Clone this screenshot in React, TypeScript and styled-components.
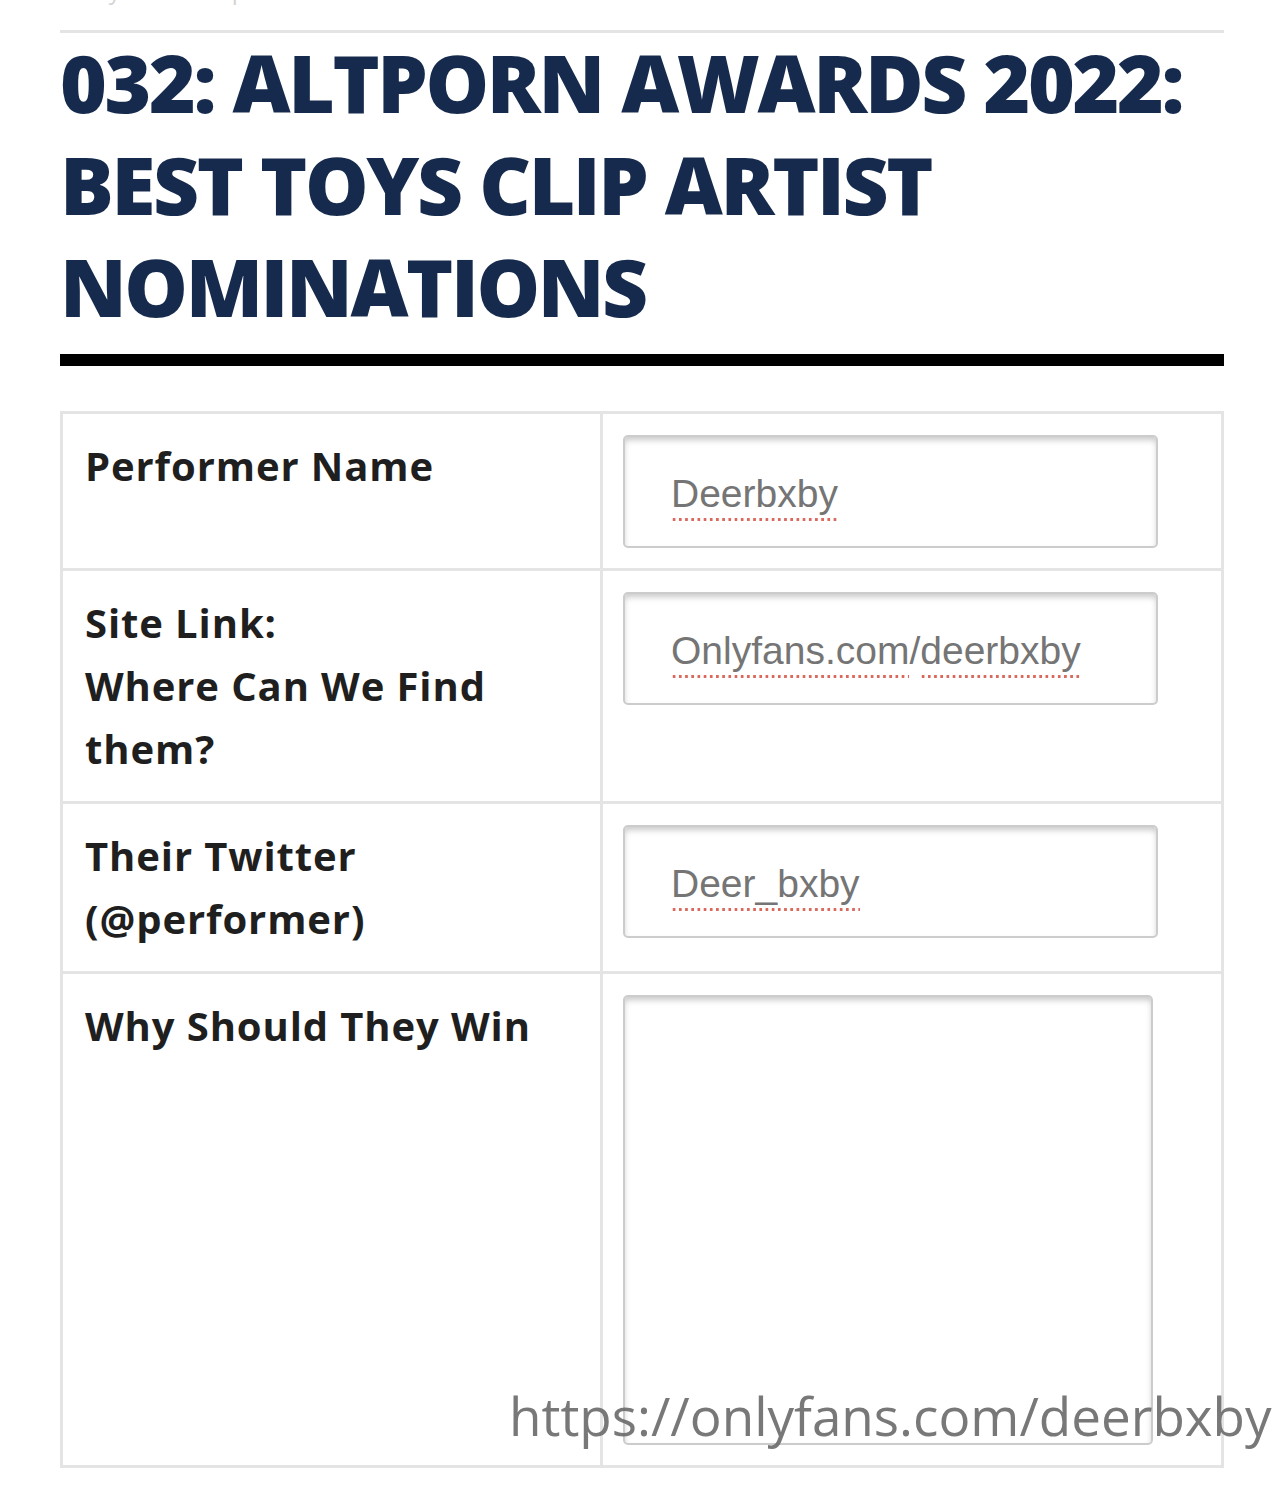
import React from "react";
import styled, { createGlobalStyle } from "styled-components";

const GlobalStyle = createGlobalStyle`
    html, body {
        margin: 0;
        padding: 0;
        background: #ffffff;
    }
    body {
        font-family: "Open Sans", "Noto Sans", Arial, sans-serif;
        overflow: hidden;
    }
`;

type Part = { text: string; typo?: boolean };

type Row = {
    label: string[];
    value?: Part[];
    tall?: boolean;
};

const rows: Row[] = [
    { label: ["Performer Name"], value: [{ text: "Deerbxby", typo: true }] },
    {
        label: ["Site Link:", "Where Can We Find", "them?"],
        value: [
            { text: "Onlyfans.com", typo: true },
            { text: "/" },
            { text: "deerbxby", typo: true },
        ],
    },
    { label: ["Their Twitter", "(@performer)"], value: [{ text: "Deer_bxby", typo: true }] },
    { label: ["Why Should They Win"], tall: true },
];

export default function App() {
    return (
        <Page>
            <GlobalStyle />
            <Meta>by admin&nbsp;&nbsp;&nbsp;April 2022&nbsp;&nbsp;&nbsp;0</Meta>
            <TopRule />
            <Title>
                032: ALTPORN AWARDS 2022:
                <br />
                BEST TOYS CLIP ARTIST
                <br />
                NOMINATIONS
            </Title>
            <ThickBar />

            <FormTable>
                {rows.map((row) => (
                    <React.Fragment key={row.label[0]}>
                        <LabelCell>
                            {row.label.map((line) => (
                                <LabelLine key={line}>{line}</LabelLine>
                            ))}
                        </LabelCell>
                        <FieldCell>
                            {row.tall ? (
                                <Area />
                            ) : (
                                <Field role="textbox">
                                    {row.value?.map((part) => (
                                        <Word key={part.text} $typo={part.typo}>
                                            {part.text}
                                        </Word>
                                    ))}
                                </Field>
                            )}
                        </FieldCell>
                    </React.Fragment>
                ))}
            </FormTable>

            <Watermark>https://onlyfans.com/deerbxby</Watermark>
        </Page>
    );
}

const Page = styled.div`
    position: relative;
    width: 1284px;
    height: 1497px;
    box-sizing: border-box;
    padding: 0 60px;
    overflow: hidden;
`;

const Meta = styled.div`
    margin-top: -25px;
    padding-left: 34px;
    height: 30px;
    line-height: 30px;
    font-size: 24px;
    color: #d4d4d4;
    white-space: nowrap;
`;

const TopRule = styled.div`
    margin-top: 25px;
    height: 3px;
    background: #e4e4e4;
`;

const Title = styled.h1`
    margin: -2px 0 0;
    font-family: "Open Sans", "Noto Sans", sans-serif;
    font-weight: 800;
    font-size: 80px;
    line-height: 102px;
    letter-spacing: -2.4px;
    color: #152a4c;
    white-space: nowrap;
`;

const ThickBar = styled.div`
    margin-top: 17px;
    height: 12px;
    background: #000000;
`;

const FormTable = styled.div`
    margin-top: 45px;
    display: grid;
    grid-template-columns: 537px 1fr;
    gap: 3px;
    padding: 3px;
    background: #e4e4e4;
`;

const LabelCell = styled.div`
    background: #ffffff;
    padding: 20px 22px 21px;
`;

const LabelLine = styled.div`
    font-family: "Open Sans", "Noto Sans", sans-serif;
    font-weight: 700;
    font-size: 40px;
    line-height: 63px;
    letter-spacing: 0.9px;
    color: #1f1f1f;
    white-space: nowrap;
`;

const FieldCell = styled.div`
    background: #ffffff;
    padding: 21px 20px 20px;
`;

const Field = styled.div`
    box-sizing: border-box;
    width: 535px;
    height: 113px;
    padding: 4px 0 0 46px;
    display: flex;
    align-items: center;
    border: 2px solid #cccccc;
    border-radius: 5px;
    box-shadow: inset 0 4px 6px -1px rgba(0, 0, 0, 0.22);
    font-family: "Liberation Sans", Arial, sans-serif;
    font-size: 39px;
    color: #757575;
    white-space: nowrap;
`;

const Word = styled.span<{ $typo?: boolean }>`
    display: inline-block;
    padding: 8px 0;
    background-image: ${(p) =>
        p.$typo ? "radial-gradient(circle, #d9695d 1.4px, transparent 1.8px)" : "none"};
    background-size: 6.2px 5px;
    background-repeat: repeat-x;
    background-position: 0 calc(100% - 2px);
`;

const Area = styled.textarea`
    display: block;
    box-sizing: border-box;
    width: 530px;
    height: 450px;
    margin: 0;
    border: 2px solid #cccccc;
    border-radius: 5px;
    box-shadow: inset 0 4px 6px -1px rgba(0, 0, 0, 0.22);
    resize: none;
    outline: none;
    background: #ffffff;
`;

const Watermark = styled.div`
    position: absolute;
    left: 509px;
    top: 1389px;
    font-family: "Open Sans", "Noto Sans", sans-serif;
    font-weight: 400;
    font-size: 53px;
    line-height: 53px;
    color: rgba(105, 105, 105, 0.9);
    white-space: nowrap;
    pointer-events: none;
`;
